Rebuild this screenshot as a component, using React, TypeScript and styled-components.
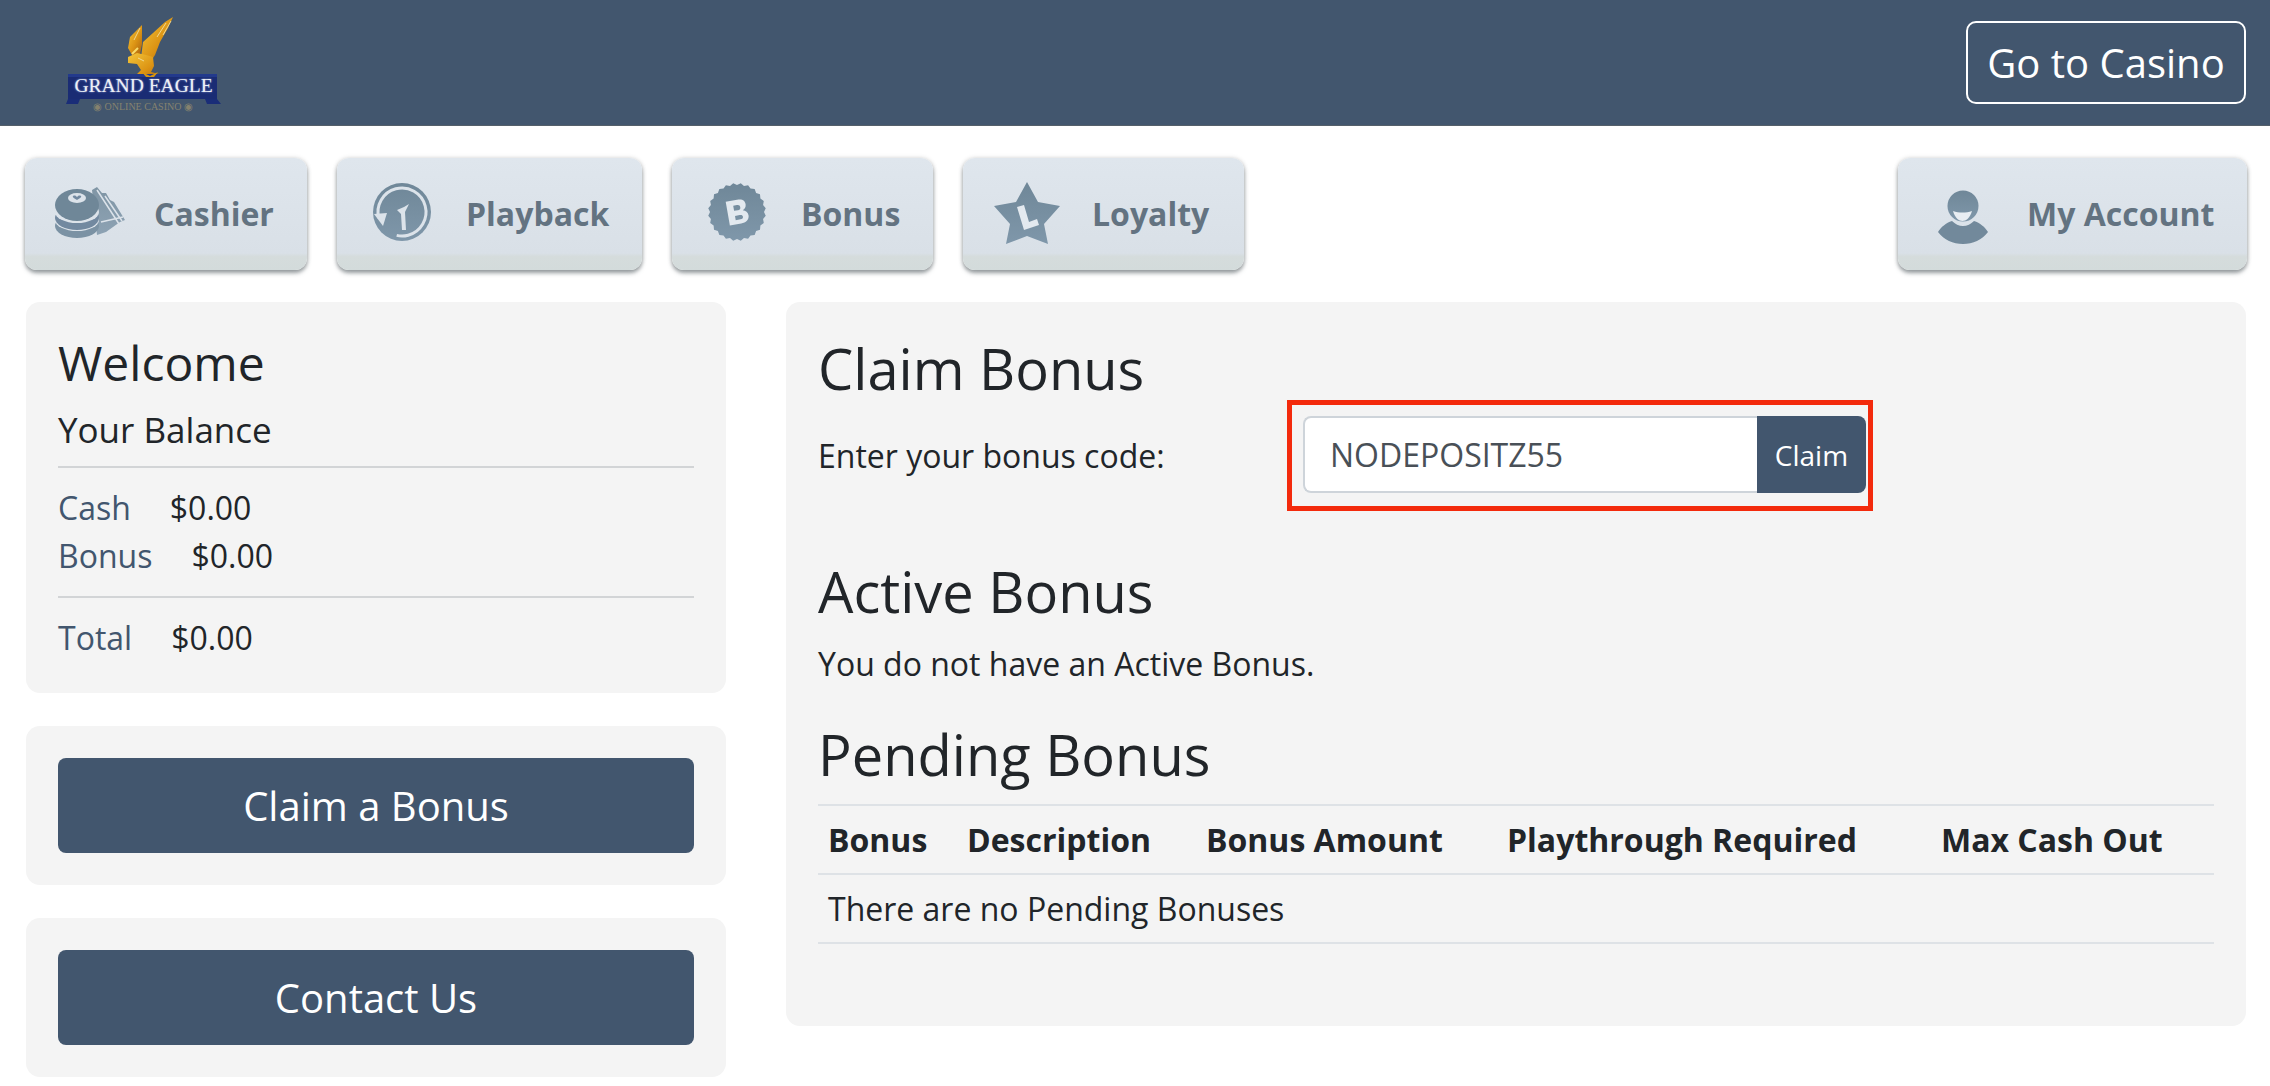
// App.tsx — casino cashier lobby, bonus tab

import styled, {createGlobalStyle} from 'styled-components';

const GlobalStyle = createGlobalStyle`
  html, body { margin: 0; padding: 0; background: #fff; }
  body { font-family: 'Open Sans', 'Liberation Sans', sans-serif; color: #212529; }
  * { box-sizing: border-box; }
`;

const Page = styled.div`
  width: 2270px;
  height: 1086px;
  overflow: hidden;
`;

const Header = styled.header`
  height: 126px;
  background: #42566e;
  display: flex;
  align-items: center;
  justify-content: space-between;
  padding: 0 24px 0 66px;
  border-bottom: 1px solid #55606a;
`;

const LogoWrap = styled.div`
  width: 156px;
  height: 100px;
  margin-top: 2px;
  position: relative;
`;

const BannerTitle = styled.div`
  position: absolute;
  left: 2px;
  right: 3px;
  top: 60px;
  height: 24px;
  color: #eef0f6;
  font-family: 'Liberation Serif', serif;
  font-size: 19.5px;
  line-height: 24px;
  text-align: center;
  white-space: nowrap;
  text-shadow: 0 0 2px #9fb0e0;
`;

const BannerSub = styled.div`
  position: absolute;
  left: -2px;
  right: 0;
  top: 87px;
  color: #85826e;
  font-family: 'Liberation Serif', serif;
  font-size: 10px;
  line-height: 12px;
  text-align: center;
  white-space: nowrap;
`;

const CasinoButton = styled.a`
  width: 280px;
  height: 83px;
  border: 2px solid #fff;
  border-radius: 10px;
  color: #fff;
  font-size: 40px;
  display: flex;
  align-items: center;
  justify-content: center;
`;

const Nav = styled.nav`
  display: flex;
  gap: 30px;
  padding: 32px 23px 0 25px;
`;

const NavButton = styled.a<{$w: number; $push?: boolean}>`
  width: ${(p) => p.$w}px;
  height: 112px;
  margin-left: ${(p) => (p.$push ? 'auto' : '0')};
  border-radius: 12px;
  background: linear-gradient(#dfe6ed 0%, #d9e0e7 85%, #d5dcdc 88%, #d3dbdb 100%);
  box-shadow: 0 3px 4px rgba(70, 80, 85, 0.55), 0 0 5px rgba(0, 0, 0, 0.14);
  display: flex;
  align-items: center;
  color: #637381;
  font-size: 32px;
  font-weight: 700;
  padding: 0 0 2px 28px;
`;

const NavIcon = styled.svg`
  width: 78px;
  height: 70px;
  flex: none;
  margin-right: 23px;
`;

const Main = styled.main`
  display: grid;
  grid-template-columns: 700px 1460px;
  gap: 60px;
  padding: 32px 25px 0 26px;
`;

const Side = styled.div`
  display: flex;
  flex-direction: column;
  gap: 33px;
`;

const Card = styled.section`
  background: #f4f4f4;
  border-radius: 14px;
  padding: 32px;
`;

const WelcomeCard = styled(Card)`
  padding-top: 34px;
  padding-bottom: 31px;
`;

const Welcome = styled.h2`
  margin: 0;
  font-size: 48px;
  font-weight: 400;
  line-height: 54px;
  color: #212529;
`;

const BalanceTitle = styled.div`
  font-size: 35px;
  line-height: 44px;
  margin-top: 18px;
  padding-bottom: 14px;
  border-bottom: 2px solid #d2d4d6;
`;

const BalanceList = styled.div`
  padding: 16px 0;
  font-size: 32px;
  line-height: 48px;
  & + & {
    border-top: 2px solid #d2d4d6;
    padding-bottom: 0;
  }
`;

const BalanceLine = styled.div`
  display: flex;
  gap: 39px;
`;

const Label = styled.span`
  color: #42566e;
`;

const Value = styled.span`
  color: #212529;
`;

const SideButton = styled.a`
  display: flex;
  align-items: center;
  justify-content: center;
  height: 95px;
  background: #42566e;
  border-radius: 8px;
  color: #fff;
  font-size: 40px;
`;

const Content = styled(Card)`
  height: 724px;
  padding-top: 33px;
`;

const Heading = styled.h1<{$top?: number}>`
  margin: ${(p) => p.$top ?? 0}px 0 0;
  font-size: 56px;
  font-weight: 400;
  line-height: 66px;
  color: #212529;
`;

const CodeRow = styled.div`
  display: flex;
  align-items: center;
  margin-top: -1px;
`;

const CodeLabel = styled.label`
  width: 469px;
  font-size: 32px;
`;

const Highlight = styled.div`
  width: 586px;
  height: 111px;
  border: 5px solid #f32a0c;
  padding: 11px 2px 0 11px;
  display: flex;
  align-items: flex-start;
`;

const CodeInput = styled.div`
  flex: 1;
  height: 77px;
  background: #fff;
  border: 2px solid #ced4da;
  border-right: 0;
  border-radius: 8px 0 0 8px;
  color: #495057;
  font-size: 32px;
  line-height: 73px;
  padding-left: 25px;
`;

const CodeButton = styled.button`
  width: 109px;
  height: 77px;
  border: 0;
  border-radius: 0 8px 8px 0;
  background: #42566e;
  color: #fff;
  font-family: inherit;
  font-size: 28px;
`;

const Copy = styled.p`
  margin: 18px 0 0;
  font-size: 32px;
  line-height: 44px;
`;

const Table = styled.table`
  width: 100%;
  margin-top: 17px;
  border-collapse: collapse;
  table-layout: fixed;
  font-size: 32px;
  th, td {
    padding: 0 10px;
    height: 69px;
    text-align: left;
    border-top: 2px solid #dee2e6;
    white-space: nowrap;
  }
  tr:last-child td { border-bottom: 2px solid #dee2e6; }
`;

const Col = styled.col<{$w: number}>`
  width: ${(p) => p.$w}px;
`;

const Defs = ({id}: {id: string}) => (
  <defs>
    <linearGradient id={id} x1="0" y1="0" x2="0" y2="1">
      <stop offset="0" stopColor="#6f8798" />
      <stop offset="1" stopColor="#7f97aa" />
    </linearGradient>
  </defs>
);

const CashierIcon = () => (
  <NavIcon viewBox="0 0 78 70">
    <Defs id="g1" />
    <path d="M39 12l5-3 5 6 4 0 4 7 4 2 11 18-5 2-14 10-9 3z" fill="url(#g1)" opacity="0.85" />
    <path d="M44 12l22 34M52 18l17 25M48 44l22-5" stroke="#dce3ea" strokeWidth="1.5" fill="none" />
    <ellipse cx="24" cy="48" rx="22" ry="12" fill="#7b92a4" />
    <ellipse cx="24" cy="42" rx="22" ry="11" fill="#dce3ea" />
    <ellipse cx="24" cy="40" rx="22" ry="12" fill="#7289a0" />
    <ellipse cx="24" cy="34" rx="22" ry="11" fill="#dce3ea" />
    <ellipse cx="24" cy="27" rx="22" ry="16" fill="#6f8798" />
    <ellipse cx="24" cy="20" rx="9" ry="5" fill="#dce3ea" />
    <path d="M20 18c2-1 3 0 4 1 1-1 2-2 4-1 1 1-2 3-4 4-2-1-5-3-4-4z" fill="#7289a0" />
  </NavIcon>
);

const PlaybackIcon = () => (
  <NavIcon viewBox="0 0 78 70">
    <Defs id="g2" />
    <circle cx="37" cy="34" r="29" fill="url(#g2)" />
    <circle cx="37" cy="34" r="24" fill="none" stroke="#dce3ea" strokeWidth="3" strokeDasharray="124 27" transform="rotate(165 37 34)" />
    <path d="M9 36l13-1-4 13z" fill="#dce3ea" />
    <path d="M37 52l-1-16-4-4 7-3 5-3-4 8 1 18z" fill="#dce3ea" />
  </NavIcon>
);

const badgePoints = Array.from({length: 48}, (_, i) => {
  const r = i % 2 ? 29 : 27;
  const a = (i / 48) * Math.PI * 2;
  return `${37 + r * Math.cos(a)},${34 + r * Math.sin(a)}`;
}).join(' ');

const BonusIcon = () => (
  <NavIcon viewBox="0 0 78 70">
    <Defs id="g3" />
    <polygon points={badgePoints} fill="url(#g3)" />
    <path
      fillRule="evenodd"
      fill="#e3e9ef"
      transform="rotate(-10 37 35) translate(-1 4) scale(0.96 0.86)"
      d="M30 21h12c6 0 8 3 8 7 0 3-2 5-4 6 3 1 5 3 5 7 0 5-4 8-9 8H30zM37 27v6h4c2 0 3-1 3-3s-1-3-3-3zM37 39v5h5c2 0 3-1 3-2.500s-1-2.500-3-2.500z"
    />
  </NavIcon>
);

const LoyaltyIcon = () => (
  <NavIcon viewBox="0 0 78 70">
    <Defs id="g4" />
    <path d="M36 4l11 20 22 4-16 18 4 20-21-8-21 8 4-20L3 28l22-4z" fill="url(#g4)" />
    <path d="M26 29l7-2 5 17 8-3 2 6-15 5z" fill="#e3e9ef" />
  </NavIcon>
);

const AccountIcon = () => (
  <NavIcon viewBox="0 0 78 70">
    <Defs id="g5" />
    <circle cx="37" cy="28" r="15.500" fill="url(#g5)" />
    <path d="M27 33c6 2 13 2 19 0-2 7-6 10-9.500 10s-7.500-3-9.500-10z" fill="#e8edf2" />
    <path d="M26 43c3 3 7 5 11 5s8-2 11-5c6 2 11 6 14 11-6 8-15 12-25 12s-19-4-25-12c3-5 8-9 14-11z" fill="#72899b" />
  </NavIcon>
);

const Logo = () => (
  <LogoWrap>
    <svg width="156" height="100" viewBox="0 0 156 100">
      <defs>
        <linearGradient id="gold" x1="0" y1="0" x2="1" y2="1">
          <stop offset="0" stopColor="#f4c63a" />
          <stop offset="0.55" stopColor="#dc9414" />
          <stop offset="1" stopColor="#a8600e" />
        </linearGradient>
      </defs>
      <path d="M76 11L64 23l-2 11 4 7 8-1 2-10z" fill="url(#gold)" />
      <path d="M107 3l-5 11-8 14-5 13-6 9-8-6 2-16 10-9 12-11z" fill="url(#gold)" />
      <path d="M62 43l9-4 9 2 7 2 1 9-3 6 12 3-8 1-6-2-2 5-9 0-5 2 3-6 5-5-4-6-9-1z" fill="url(#gold)" />
      <path d="M74 14l-6 12M105 7l-8 14M100 9l-9 14M72 44l6 3" stroke="#f3e6b0" strokeWidth="1" fill="none" opacity="0.8" />
      <path d="M72 34l-6 6" stroke="#f9dc6a" strokeWidth="2" fill="none" />
      <path d="M2 60h149v25H2z" fill="#1a2c74" />
      <path d="M2 85h12l-2 5H0zM139 85h12l4 5h-14z" fill="#1a2d78" />
      <path d="M2 60h149v3H2z" fill="#233a8c" />
      <path d="M76 58l8 4 8-4-4 5h-8z" fill="#d8960f" />
    </svg>
    <BannerTitle>GRAND EAGLE</BannerTitle>
    <BannerSub>◉ ONLINE CASINO ◉</BannerSub>
  </LogoWrap>
);

export default function App() {
  return (
    <Page>
      <GlobalStyle />
      <Header>
        <Logo />
        <CasinoButton>Go to Casino</CasinoButton>
      </Header>

      <Nav>
        <NavButton $w={282}><CashierIcon />Cashier</NavButton>
        <NavButton $w={305}><PlaybackIcon />Playback</NavButton>
        <NavButton $w={261}><BonusIcon />Bonus</NavButton>
        <NavButton $w={281}><LoyaltyIcon />Loyalty</NavButton>
        <NavButton $w={349} $push><AccountIcon />My Account</NavButton>
      </Nav>

      <Main>
        <Side>
          <WelcomeCard>
            <Welcome>Welcome</Welcome>
            <BalanceTitle>Your Balance</BalanceTitle>
            <BalanceList>
              <BalanceLine><Label>Cash</Label><Value>$0.00</Value></BalanceLine>
              <BalanceLine><Label>Bonus</Label><Value>$0.00</Value></BalanceLine>
            </BalanceList>
            <BalanceList>
              <BalanceLine><Label>Total</Label><Value>$0.00</Value></BalanceLine>
            </BalanceList>
          </WelcomeCard>
          <Card><SideButton>Claim a Bonus</SideButton></Card>
          <Card><SideButton>Contact Us</SideButton></Card>
        </Side>

        <Content>
          <Heading>Claim Bonus</Heading>
          <CodeRow>
            <CodeLabel>Enter your bonus code:</CodeLabel>
            <Highlight>
              <CodeInput>NODEPOSITZ55</CodeInput>
              <CodeButton>Claim</CodeButton>
            </Highlight>
          </CodeRow>
          <Heading $top={47}>Active Bonus</Heading>
          <Copy>You do not have an Active Bonus.</Copy>
          <Heading $top={35}>Pending Bonus</Heading>
          <Table>
            <colgroup>
              <Col $w={139} />
              <Col $w={239} />
              <Col $w={301} />
              <Col $w={434} />
              <Col $w={283} />
            </colgroup>
            <thead>
              <tr>
                <th>Bonus</th>
                <th>Description</th>
                <th>Bonus Amount</th>
                <th>Playthrough Required</th>
                <th>Max Cash Out</th>
              </tr>
            </thead>
            <tbody>
              <tr><td colSpan={5}>There are no Pending Bonuses</td></tr>
            </tbody>
          </Table>
        </Content>
      </Main>
    </Page>
  );
}
